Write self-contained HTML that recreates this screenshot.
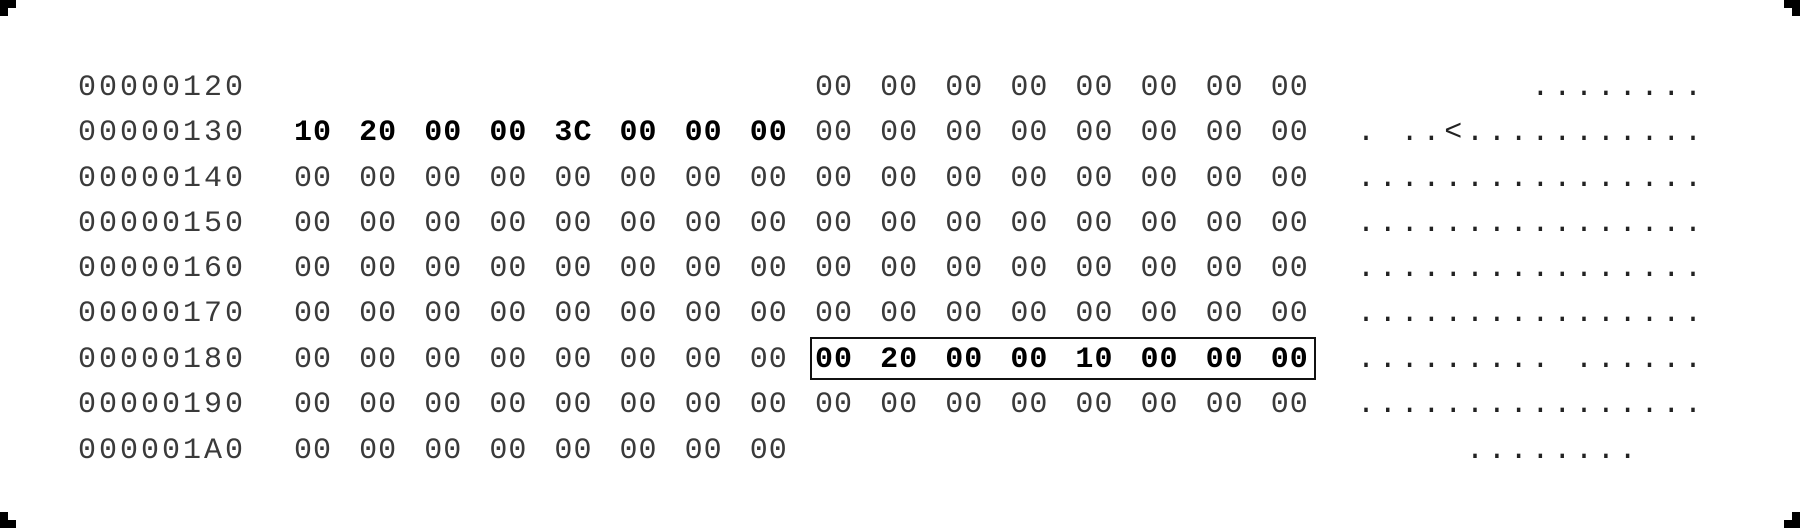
<!DOCTYPE html>
<html><head><meta charset="utf-8"><style>
html,body{margin:0;padding:0;background:#fff;width:1800px;height:528px;overflow:hidden;position:relative}
.c{position:absolute;background:#000}
.r{position:absolute;left:0;height:30px;width:1800px;font-family:"Liberation Mono",monospace;font-size:30px;line-height:30px;color:#3a3a3a;white-space:pre}
.r span{position:absolute;top:0}
.a{left:78px;letter-spacing:3px}
.h1{left:294px;letter-spacing:1px;word-spacing:8.1px}
.h2{left:815px;letter-spacing:1px;word-spacing:8.1px}
.s{left:1357px;letter-spacing:3.8px;color:#222}
b{color:#000}
.box{position:absolute;left:810px;top:337px;width:502px;height:39px;border:2px solid #111}
</style></head><body>
<div class="c" style="left:0;top:0;width:16px;height:8px"></div>
<div class="c" style="left:0;top:0;width:8px;height:16px"></div>
<div class="c" style="right:0;top:0;width:16px;height:8px"></div>
<div class="c" style="right:0;top:0;width:8px;height:16px"></div>
<div class="c" style="left:0;bottom:0;width:16px;height:8px"></div>
<div class="c" style="left:0;bottom:0;width:8px;height:16px"></div>
<div class="c" style="right:0;bottom:0;width:16px;height:8px"></div>
<div class="c" style="right:0;bottom:0;width:8px;height:16px"></div>

<div class="r" style="top:73px"><span class="a">00000120</span><span class="h2">00 00 00 00 00 00 00 00</span><span class="s">        ........</span></div>
<div class="r" style="top:118px"><span class="a">00000130</span><span class="h1"><b>10 20 00 00 3C 00 00 00</b></span><span class="h2">00 00 00 00 00 00 00 00</span><span class="s">. ..<...........</span></div>
<div class="r" style="top:164px"><span class="a">00000140</span><span class="h1">00 00 00 00 00 00 00 00</span><span class="h2">00 00 00 00 00 00 00 00</span><span class="s">................</span></div>
<div class="r" style="top:209px"><span class="a">00000150</span><span class="h1">00 00 00 00 00 00 00 00</span><span class="h2">00 00 00 00 00 00 00 00</span><span class="s">................</span></div>
<div class="r" style="top:254px"><span class="a">00000160</span><span class="h1">00 00 00 00 00 00 00 00</span><span class="h2">00 00 00 00 00 00 00 00</span><span class="s">................</span></div>
<div class="r" style="top:299px"><span class="a">00000170</span><span class="h1">00 00 00 00 00 00 00 00</span><span class="h2">00 00 00 00 00 00 00 00</span><span class="s">................</span></div>
<div class="box"></div>
<div class="r" style="top:345px"><span class="a">00000180</span><span class="h1">00 00 00 00 00 00 00 00</span><span class="h2"><b>00 20 00 00 10 00 00 00</b></span><span class="s">......... ......</span></div>
<div class="r" style="top:390px"><span class="a">00000190</span><span class="h1">00 00 00 00 00 00 00 00</span><span class="h2">00 00 00 00 00 00 00 00</span><span class="s">................</span></div>
<div class="r" style="top:436px"><span class="a">000001A0</span><span class="h1">00 00 00 00 00 00 00 00</span><span class="s">     ........</span></div>
</body></html>
